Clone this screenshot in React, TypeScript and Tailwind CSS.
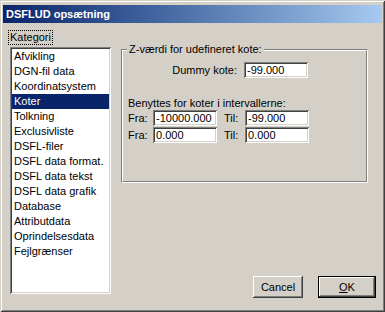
import React from "react";

const items = [
  "Afvikling",
  "DGN-fil data",
  "Koordinatsystem",
  "Koter",
  "Tolkning",
  "Exclusivliste",
  "DSFL-filer",
  "DSFL data format.",
  "DSFL data tekst",
  "DSFL data grafik",
  "Database",
  "Attributdata",
  "Oprindelsesdata",
  "Fejlgrænser",
];

function Field({ value }: { value: string }) {
  return (
    <div className="w-[64px] h-[16px] bg-white pl-[3px] leading-[16px] whitespace-nowrap overflow-hidden shadow-[inset_1px_1px_0_#808080,inset_-1px_-1px_0_#ffffff,inset_2px_2px_0_#404040,inset_-2px_-2px_0_#d4d0c8]">
      {value}
    </div>
  );
}

export default function App() {
  return (
    <div className="w-[385px] h-[312px] bg-[#d4d0c8] flex flex-col pt-[5px] px-[3px] text-[11px] text-black font-['Liberation_Sans',Arial,sans-serif] shadow-[inset_1px_1px_0_#d4d0c8,inset_-1px_-1px_0_#404040,inset_2px_2px_0_#ffffff,inset_-2px_-2px_0_#808080]">
      <div className="h-[18px] flex items-center pl-[3px] bg-gradient-to-r from-[#0a246a] to-[#a6caf0] text-white font-bold text-[11px]">
        DSFLUD opsætning
      </div>
      <div className="flex flex-row pl-[5px] pt-[7px]">
        <div className="flex flex-col">
          <div className="self-start h-[15px] border border-dotted border-black px-[1px] leading-[13px]">
            Kategori
          </div>
          <div className="ml-[2px] mt-[2px] w-[101px] h-[247px] bg-white pt-[2px] px-[2px] shadow-[inset_1px_1px_0_#808080,inset_-1px_-1px_0_#ffffff,inset_2px_2px_0_#404040,inset_-2px_-2px_0_#d4d0c8]">
            {items.map((it) => (
              <div
                key={it}
                className={
                  it === "Koter"
                    ? "h-[15px] leading-[15px] pl-[2px] bg-[#0a246a] text-white whitespace-nowrap"
                    : "h-[15px] leading-[15px] pl-[2px] whitespace-nowrap"
                }
              >
                {it}
              </div>
            ))}
          </div>
        </div>
        <div className="ml-[10px] w-[255px] flex flex-col">
          <div className="relative mt-[19px] w-[247px] h-[134px] border border-t-[#808080] border-l-[#808080] border-b-white border-r-white">
            <div className="w-full h-full border border-t-white border-l-white border-b-[#808080] border-r-[#808080] flex flex-col">
              <div className="flex flex-row items-center mt-[11px]">
                <div className="w-[114px] text-right leading-[16px]">Dummy kote:</div>
                <div className="ml-[7px]">
                  <Field value="-99.000" />
                </div>
              </div>
              <div className="mt-[19px] pl-[5px] leading-[13px] whitespace-nowrap">
                Benyttes for koter i intervallerne:
              </div>
              <div className="flex flex-col gap-[1px] pl-[5px]">
                <div className="flex flex-row items-center">
                  <div className="w-[25px] leading-[16px]">Fra:</div>
                  <Field value="-10000.000" />
                  <div className="ml-[7px] w-[21px] leading-[16px]">Til:</div>
                  <Field value="-99.000" />
                </div>
                <div className="flex flex-row items-center">
                  <div className="w-[25px] leading-[16px]">Fra:</div>
                  <Field value="0.000" />
                  <div className="ml-[7px] w-[21px] leading-[16px]">Til:</div>
                  <Field value="0.000" />
                </div>
              </div>
            </div>
            <div className="absolute left-[5px] top-[-7px] px-[2px] bg-[#d4d0c8] leading-[13px] whitespace-nowrap">
              Z-værdi for udefineret kote:
            </div>
          </div>
          <div className="mt-[93px] flex flex-row justify-end gap-[15px]">
            <div className="w-[50px] h-[22px] flex items-center justify-center shadow-[inset_-1px_-1px_0_#404040,inset_1px_1px_0_#ffffff,inset_-2px_-2px_0_#808080]">
              Cancel
            </div>
            <div className="w-[58px] h-[22px] border border-black">
              <div className="w-full h-full flex items-center justify-center shadow-[inset_-1px_-1px_0_#404040,inset_1px_1px_0_#ffffff,inset_-2px_-2px_0_#808080]">
                <span>
                  <span className="underline">O</span>K
                </span>
              </div>
            </div>
          </div>
        </div>
      </div>
    </div>
  );
}
